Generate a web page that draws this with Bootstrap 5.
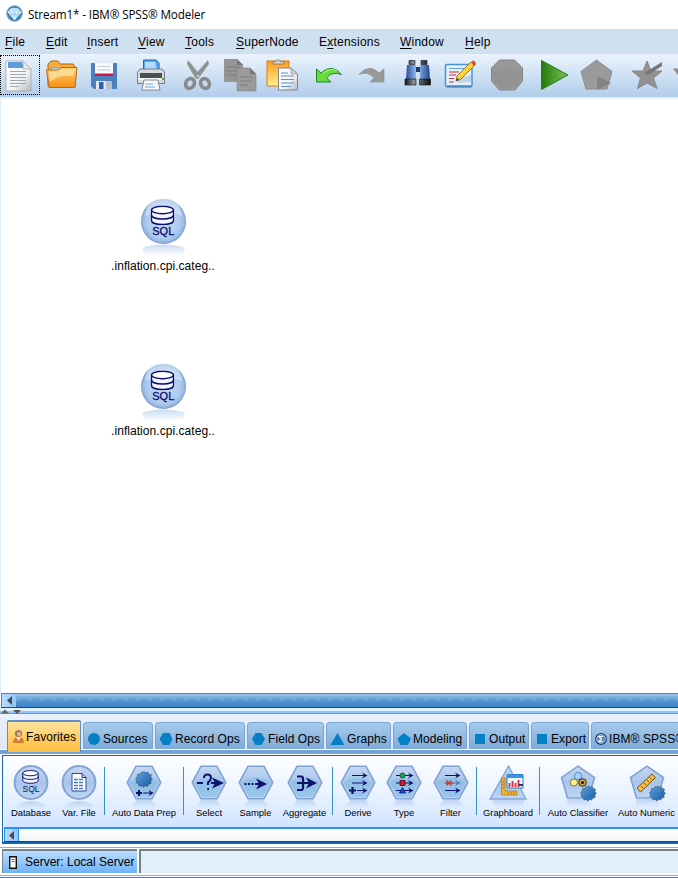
<!DOCTYPE html>
<html lang="en">
<head>
<meta charset="utf-8">
<title>Stream1* - IBM® SPSS® Modeler</title>
<link href="https://cdn.jsdelivr.net/npm/bootstrap@5.3.0/dist/css/bootstrap.min.css" rel="stylesheet">
<style>
html,body{height:100%;overflow:hidden}
body{font:12px/14px "Liberation Sans",Arial,sans-serif;color:#000;background:#fff}
svg{display:block;flex:none;overflow:visible}
.app{width:678px;height:878px;overflow:hidden}
.titlebar{height:29px;padding:0 0 2px 6px;gap:5px;font:11.7px/16px "Open Sans","Noto Sans",sans-serif;letter-spacing:-.13px}
.menus{height:25px;background:#cfe0f1;padding-left:5px;display:grid;grid-template-columns:41px 41px 51px 47px 51px 83px 81px 65px 40px;letter-spacing:.22px;align-items:center}
.menus span{white-space:nowrap}
.menus u{text-underline-offset:2px}
.tools{height:43px;gap:15px;padding:0 0 2px 4px;background:linear-gradient(#eaf3fd,#cfe1f4 50%,#b1cceb)}
.tools>div{gap:10px}
.focusbox{outline:1px dotted #000;outline-offset:3px}
.canvas{height:596px;border-top:2px solid #e6f0fc;border-left:1px solid #dfeefb}
.node{position:absolute;width:130px;text-align:center;letter-spacing:.05px}
.node.n1{left:97px;top:100px}.node.n2{left:97px;top:265px}
.node-label{margin-top:5px}
.hscroll{height:15px;margin-left:1px;border:1px solid #1c90f5;border-bottom-color:#0a4c90;background:linear-gradient(#9fc7ec,#5f9fd8 40%,#4a90d0 65%,#3f83c6);border-right:0}
.arrow-btn{width:14px;height:100%;background:linear-gradient(90deg,#b8dcff,#90c4fa)}
.hscroll .track{background:repeating-linear-gradient(90deg,rgba(255,255,255,.09) 0 5px,transparent 5px 12px) 0 4px/100% 3px repeat-x}
.divider{height:6px;background:linear-gradient(#e0f3ff 0 3px,#8fc4ff 3px 5px,#7297c0 5px)}
.tabstrip{height:40px;background:linear-gradient(#ebf1fc,#dfe6f6 35px,#fff 35px);background-clip:padding-box;border-bottom:4px solid #73a3d6;padding:5px 0 0 7px}
.tabgrid{display:grid;grid-template-columns:74px 70px 90px 77px 65px 74px 60px 58px 110px;column-gap:2px;height:30px;align-items:end}
.ptab{height:27px;border:1px solid #7aa6d6;border-bottom:0;border-radius:4px 4px 0 0;background:linear-gradient(#a7cbec,#7eaad8);padding:5px 0 0 4px;gap:3px;white-space:nowrap;overflow:hidden;letter-spacing:.08px}
.ptab.sel{height:32px;margin-bottom:-3px;z-index:1;border:1px solid #5f8fc4;border-top-width:2px;border-bottom:0;background:linear-gradient(#ffe3a0,#ffcf68 50%,#ffbe40);padding:0 0 1px 4px;gap:1px;border-radius:2px 2px 0 0}
.palette{margin:1px 0 0 2px;height:89px;border:1px solid #1166b8;border-right:0;border-bottom-width:2px;padding:0 0 0 1px;background:#fff}
.pgrid{height:71px;padding:9px 0 0 4px;display:grid;grid-template-columns:46px 50px 1px 78px 1px 50px 43px 55px 1px 50px 42px 51px 1px 62px 1px 76px 61px;background:linear-gradient(#fdfeff,#e8f2ff 55%,#d0e4ff);font-size:9.4px;line-height:11px}
.pgrid>div{display:flex;flex-direction:column;align-items:center;white-space:nowrap;min-width:0}
.pgrid>i{background:#3a8fd0;height:48px;margin-top:2px}
.pgrid svg{margin-bottom:6px}
.pscroll{height:15px;border-top:2px solid #2b90f5;border-bottom:1px solid #153f66;background:linear-gradient(#fff,#f2f3f6)}
.pscroll .arrow-btn{width:15px;border-left:1px solid #2b90f5;border-right:1px solid #2b90f5}
.statusbar{margin-top:3px;height:29px;border-top:1px solid #a3a7ae;border-bottom:1px solid #a3a7ae;padding:1px 0 2px 2px;background:#fff;gap:2px}
.server{width:135px;border:1px solid #77818b;border-width:2px 0 0 1px;background:linear-gradient(#b9dcff,#6db3f5);padding:0 0 0 6px;gap:8px}
.fillcell{border:1px solid #77818b;border-width:2px 0 0 2px;background:#e3effb}
.baseline{height:1px;background:#2482d8}
</style>
<script src="https://cdn.jsdelivr.net/npm/bootstrap@5.3.0/dist/js/bootstrap.bundle.min.js"></script>
</head>
<body>
<svg width="0" height="0" class="position-absolute">
<defs>
<linearGradient id="gb" x2="0" y2="1"><stop stop-color="#c4d7f2"/><stop offset=".5" stop-color="#a9c5ea"/><stop offset="1" stop-color="#bdd6f4"/></linearGradient>
<radialGradient id="gball" cx=".5" cy=".5" r=".5"><stop stop-color="#c6dcf7"/><stop offset=".75" stop-color="#aecaee"/><stop offset=".9" stop-color="#9bbbe6"/><stop offset="1" stop-color="#7797cb"/></radialGradient>
<linearGradient id="gr" x2="0" y2="1"><stop stop-color="#9dbde6" stop-opacity=".55"/><stop offset="1" stop-color="#9dbde6" stop-opacity="0"/></linearGradient>
<linearGradient id="go" x2="0" y2="1"><stop stop-color="#ffd27a"/><stop offset="1" stop-color="#f58f10"/></linearGradient>
<linearGradient id="gp" x2="1" y2="1"><stop stop-color="#fff"/><stop offset=".6" stop-color="#f1f3f5"/><stop offset="1" stop-color="#b5b8bc"/></linearGradient>
<linearGradient id="gbar"><stop stop-color="#10141c"/><stop offset=".35" stop-color="#8d9298"/><stop offset="1" stop-color="#0a0d14"/></linearGradient>
<linearGradient id="gblu"><stop stop-color="#274f9c"/><stop offset=".45" stop-color="#9cc2f6"/><stop offset="1" stop-color="#1f448c"/></linearGradient>
<linearGradient id="gplay"><stop stop-color="#237a08"/><stop offset="1" stop-color="#7cc25c"/></linearGradient>
<linearGradient id="gyel" x2="0" y2="1"><stop stop-color="#ff9a1e"/><stop offset="1" stop-color="#fff08a"/></linearGradient>
<linearGradient id="ggear" x2="1" y2="1"><stop stop-color="#5aa0e0"/><stop offset="1" stop-color="#1b5ba4"/></linearGradient>
<symbol id="hexa" viewBox="0 0 36 36" overflow="visible">
<path d="M10.500 34.500L5 43H31L25.500 34.500Z" fill="url(#gr)"/>
<path d="M10 1.200H26L34.800 17.500 26 33.800H10L1.200 17.500Z" fill="url(#gb)" stroke="#82a2d2" stroke-width="1.600"/>
<path d="M3.500 17Q18 8 32.500 17L25 32H11Z" fill="#86bde4" opacity=".65"/></symbol>
<symbol id="circ" viewBox="0 0 36 36" overflow="visible">
<path d="M3 41Q18 31 33 41L33 44H3Z" fill="url(#gr)"/>
<circle cx="18" cy="17.500" r="16.400" fill="url(#gb)" stroke="#86a4d3" stroke-width="2"/></symbol>
<symbol id="penta" viewBox="0 0 36 36" overflow="visible">
<path d="M8 34L5 42H31L28 34Z" fill="url(#gr)"/>
<path d="M18 1.200L34.500 12.500 28.500 33H7.500L1.500 12.500Z" fill="url(#gb)" stroke="#82a2d2" stroke-width="1.600"/></symbol>
<symbol id="gear" viewBox="0 0 18 18"><path d="M9 .8l1.600 1.600 2.400-.8 .8 2.100 2.500.6-.5 2.500 1.500 1.900-1.600 1.900.3 2.600-2.500.5-1.100 2.300-2.400-.8L8.500 17l-1.900-1.700-2.500.4-.8-2.400L1 12.200l.7-2.400L.6 7.800l2-1.500.1-2.500 2.500-.3L6.500 1.500 8 2Z" fill="url(#ggear)" stroke="#455060" stroke-width=".6"/></symbol>
<symbol id="db" viewBox="0 0 24 20"><path d="M1 4.500V15C1 20.300 23 20.300 23 15V4.500" fill="#f0f6ff" stroke="#0c0c6e" stroke-width="1.400"/><ellipse cx="12" cy="4.500" rx="11" ry="3.700" fill="#fbfdff" stroke="#0c0c6e" stroke-width="1.400"/><path d="M1 9.500C1 14.800 23 14.800 23 9.500" fill="none" stroke="#0c0c6e" stroke-width="1.400"/></symbol>
<symbol id="bignode" viewBox="0 0 46 57">
<path d="M2 49Q10 45.500 23.500 45.500T45 49L42 57H5Z" fill="url(#gr)"/>
<circle cx="23.500" cy="22.500" r="22.500" fill="url(#gball)"/>
<path d="M5 17A18.500 18.500 0 0 1 42 17Q23 9 5 17" fill="#dce8f9" opacity=".6"/>
<use href="#db" x="10.500" y="6.500" width="24" height="20"/>
<text x="23.300" y="36" font-size="11" text-anchor="middle" fill="#0c0c6e" stroke="#0c0c6e" stroke-width=".3">SQL</text></symbol>
<symbol id="arr" viewBox="0 0 12 8"><path d="M0 4H8" stroke="#10106e" stroke-width="1.400"/><path d="M6 .5L12 4 6 7.500 8 4Z" fill="#10106e"/></symbol>
<symbol id="leftarrow" viewBox="0 0 5 9"><path d="M5 0V9L0 4.500Z" fill="#4b4b4f"/></symbol>
</defs>
</svg>
<div class="app d-flex flex-column">
<header class="titlebar d-flex align-items-center">
<svg width="17" height="17"><circle cx="8.500" cy="8.500" r="7.800" fill="#3b86b4" stroke="#8ba9bd"/><path d="M5 3.800H12L15 7.300 8.500 14.600 2 7.300Z" fill="#9bd0ec" stroke="#e6f5fc"/><path d="M2 7.300H15M5 3.800L8.500 14.600 12 3.800M5.500 7.300L8.500 3.800 11.500 7.300" stroke="#e9f6fc" fill="none" stroke-width=".9"/></svg><span class="text-nowrap">Stream1* - IBM® SPSS® Modeler</span>
</header>
<nav class="menus"><span><u>F</u>ile</span><span><u>E</u>dit</span><span><u>I</u>nsert</span><span><u>V</u>iew</span><span><u>T</u>ools</span><span><u>S</u>uperNode</span><span>E<u>x</u>tensions</span><span><u>W</u>indow</span><span><u>H</u>elp</span></nav>
<div class="tools d-flex align-items-center">
<div class="d-flex">
<svg class="focusbox" width="32" height="32"><path d="M2 2H19L27 10V32H2Z" fill="url(#gp)" stroke="#a2a5a8" stroke-width=".8"/><path d="M4 3H18L20 9H4Z" fill="#5b9cdb"/><path d="M19 2V10H27Z" fill="#e7e9ec" stroke="#999" stroke-width=".6"/><path d="M6 12.500H22M6 15.500H22M6 18.500H22M6 21.500H22M6 24.500H22M6 27.500H15" stroke="#a4a7ab" stroke-width="1"/></svg>
<svg width="32" height="32"><path d="M2 27V5L5 2H12L14 5H27L29 8V27Z" fill="#f9ab3e" stroke="#b8640c"/><path d="M5 9H29V14H5Z" fill="#d7ecfa" stroke="#4c8dc0" stroke-width=".7"/><path d="M0.500 11H12L15 8.500H31L29 28.500H3Z" fill="url(#go)" stroke="#bb6a10"/><path d="M3 13L13 12 16 10.500H29L27 17Q14 15 4 23Z" fill="#ffe6a8" opacity=".7"/></svg>
<svg width="32" height="32"><path d="M3 4H29V30H6L3 27Z" fill="#4c80bf"/><path d="M7 4H25V17H7Z" fill="#f7f9fc"/><path d="M9.500 7.500H22M9.500 11H22" stroke="#c4cad2"/><path d="M7 14.500H25V17H7Z" fill="#d01446"/><path d="M8 22H24V30H8Z" fill="#e4e8ec"/><path d="M11 23H15.500V30H11Z" fill="#2a61a8"/><path d="M18 22H24V30H18Z" fill="#b8bfc8"/></svg>
</div>
<div class="d-flex"><svg width="32" height="32"><path d="M8.500 13V1H21L24 4V13Z" fill="#58a9f0" stroke="#2065b0"/><path d="M10 3H20L22 12H10Z" fill="#b2dbff"/><path d="M2.500 13L5 10H27L29.500 13V24.500H2.500Z" fill="#d7dadd" stroke="#777c80"/><path d="M5 14H27V19H5Z" fill="#4c5054"/><path d="M3 20H29" stroke="#f5f6f6" stroke-width="2"/><path d="M27 20h2" stroke="#40b020" stroke-width="2"/><path d="M9 21H23L25 31H7Z" fill="#f6f9fb" stroke="#868b90"/><path d="M10 25H18M10 28H20" stroke="#6aa2da"/></svg></div>
<div class="d-flex">
<svg width="32" height="32"><path d="M6 1L18 16 14 20 5 5Z M26 1L27 5 16 20 12 17Z" fill="#919191"/><ellipse cx="8" cy="24.500" rx="4.200" ry="5" transform="rotate(30 8 24.500)" fill="none" stroke="#898989" stroke-width="3.600"/><ellipse cx="23" cy="24.500" rx="4.200" ry="5" transform="rotate(-30 23 24.500)" fill="none" stroke="#898989" stroke-width="3.600"/><circle cx="16" cy="17" r="1" fill="#ddd"/></svg>
<svg width="32" height="32"><path d="M0 0H13L19 6V23H0Z" fill="#959595"/><path d="M13 0V6H19Z" fill="#777"/><path d="M2 8H15M2 12H15M2 16H12" stroke="#7e7e7e"/><path d="M13 9H26L32 15V32H13Z" fill="#9b9b9b" stroke="#858585" stroke-width=".6"/><path d="M26 9V15H32Z" fill="#777"/><path d="M16 18H28M16 22H28M16 26H24" stroke="#7e7e7e"/></svg>
<svg width="32" height="32"><path d="M1 2H23V27H1Z" fill="url(#gyel)" stroke="#d97a12"/><path d="M7 5V2.500H10Q12-1.500 14 2.500H18V5Z" fill="#d2d4d6" stroke="#777" stroke-width=".8"/><path d="M12.500 9H25L31.500 15V31H12.500Z" fill="url(#gp)" stroke="#818589"/><path d="M25 9V15H31.500Z" fill="#ccd0d4" stroke="#888" stroke-width=".6"/><path d="M15 14H22M15 17H28M15 20.500H28M15 24H28M15 27.500H25" stroke="#5b93c8"/></svg>
</div>
<div class="d-flex">
<svg width="32" height="32"><path d="M3.500 10L8 14Q19 4 28.500 15.500Q19 12 13.500 19L18 23H3.500Z" fill="#68dc3c" stroke="#23852a" stroke-width="1"/><path d="M10 14Q18 8 24 12" fill="none" stroke="#b7f5a0"/></svg>
<svg width="32" height="32"><path d="M29 10L24 14Q14 4 4 15.500Q13 12 19 19L15 23H29Z" fill="#999" stroke="#8a8a8a" stroke-width=".6"/></svg>
</div>
<div class="d-flex">
<svg width="32" height="32"><path d="M8 8H13L14 24H4ZM18 8H24L28 24H18Z" fill="url(#gblu)"/><path d="M13 8H19V13H13Z" fill="#223b6a"/><path d="M5 6H14V20H4ZM18 6H27L28 20H18Z" fill="url(#gblu)"/><path d="M7 1.500H13V5.500H7ZM19 1.500H25V5.500H19ZM3 20H14V26H3ZM17.500 20H28.500V26H17.500Z" fill="url(#gbar)" stroke="#111" stroke-width=".6"/></svg>
<svg width="32" height="32"><path d="M2.500 5.500H26Q28 5.500 28 8V26Q28 28 26 28H4Q1.500 28 1.500 26V7Q1.500 5.500 3 5.500Z" fill="#e4f2fc" stroke="#4b92ce" stroke-width="1.500"/><path d="M3 27H27" stroke="#4880bb" stroke-width="1.500"/><path d="M5 9.500H20" stroke="#61a2d8"/><path d="M5 13H15M5 16H12M5 19.500H10M5 23H10" stroke="#d22b33" stroke-width="1.200"/><path d="M14 20L27 16V23L14 24Z" fill="#a7bdd3" opacity=".6"/><path d="M27 3L31 6 17 20 12 22 13 17Z" fill="#ffd236" stroke="#7a6324" stroke-width=".8"/><path d="M27 3L29 1.500Q33 3 31.500 6L29.500 7Z" fill="#d4542e"/><path d="M12 22l1-3 2 2Z" fill="#333"/></svg>
</div>
<div class="d-flex"><svg width="32" height="32"><path d="M8.500 1H23.500L31.500 9V22L24 31H8.500L.5 22V9Z" fill="#989898" stroke="#858585"/><path d="M2 13Q16 8 30 13V21L23 29H9L2 21Z" fill="#8e8e8e" opacity=".5"/></svg></div>
<div class="d-flex">
<svg width="32" height="32"><path d="M3.500 1.500V30.500L30 16Z" fill="url(#gplay)" stroke="#2a7c12"/></svg>
<svg width="32" height="32"><path d="M16.500 1L32 12.500 27 30H6L1 12.500Z" fill="#9b9b9b" stroke="#8c8c8c"/><path d="M17 17L31 24 17 31Z" fill="#838383"/></svg>
</div>
<div class="d-flex ms-1">
<svg width="32" height="32"><path d="M16 2L20 12 31 12 22.500 19 26 29.500 16 24 6.500 29.500 9.500 19 1 12H12Z" fill="#929292" stroke="#878787"/><path d="M13 14L31 3V7L17 16Z" fill="#777"/></svg>
<svg width="32" height="32"><path d="M0 9.500H8V16H5Z" fill="#8c8c8c"/></svg>
</div>
</div>
<main class="canvas position-relative">
<div class="node n1"><svg class="mx-auto" width="46" height="57"><use href="#bignode"/></svg><div class="node-label mt-0 pt-1 lh-1">.inflation.cpi.categ..</div></div>
<div class="node n2"><svg class="mx-auto" width="46" height="57"><use href="#bignode"/></svg><div class="node-label mt-0 pt-1 lh-1">.inflation.cpi.categ..</div></div>
</main>
<div class="hscroll d-flex"><div class="arrow-btn d-flex align-items-center justify-content-center"><svg width="5" height="9"><use href="#leftarrow"/></svg></div><div class="track flex-grow-1"></div></div>
<div class="divider"><svg width="24" height="5"><path d="M1 5.500L5 1.500 9 5.500Z" fill="#666"/><path d="M13 2H21L17 6Z" fill="#5a5450"/></svg></div>
<div class="tabstrip"><div class="tabgrid">
<div class="ptab sel d-flex align-items-center"><svg width="13" height="15"><path d="M1 14Q1 9 4.500 8H8.500Q12 9 12 14Z" fill="#e07b2e"/><path d="M4 8L6.500 12 9 8Z" fill="#f5e8dc"/><circle cx="6.500" cy="4.500" r="3.600" fill="#a47b62"/><circle cx="7" cy="5" r="2" fill="#e2bc9e"/></svg><span>Favorites</span></div>
<div class="ptab d-flex align-items-center"><svg width="12" height="12"><circle cx="6" cy="6" r="6" fill="#0580c4"/></svg><span>Sources</span></div>
<div class="ptab d-flex align-items-center"><svg width="12" height="12"><path d="M3 0H9.500L12.500 6 9.500 12H3L-.5 6Z" fill="#0580c4"/></svg><span>Record Ops</span></div>
<div class="ptab d-flex align-items-center"><svg width="13" height="12"><path d="M3.500 0H9.500L13 6 9.500 12H3.500L0 6Z" fill="#0580c4"/></svg><span>Field Ops</span></div>
<div class="ptab d-flex align-items-center"><svg width="13" height="12"><path d="M6.500 0L13.500 12H-.5Z" fill="#0580c4"/></svg><span>Graphs</span></div>
<div class="ptab d-flex align-items-center"><svg width="12" height="12"><path d="M6 0L13 5.500 10 12H2.500L-.5 5.500Z" fill="#0580c4"/></svg><span>Modeling</span></div>
<div class="ptab d-flex align-items-center"><svg width="12" height="10"><path d="M1 0H11V10H1Z" fill="#0580c4"/></svg><span>Output</span></div>
<div class="ptab d-flex align-items-center"><svg width="12" height="10"><path d="M1 0H11V10H1Z" fill="#0580c4"/></svg><span>Export</span></div>
<div class="ptab d-flex align-items-center"><svg width="10" height="12"><circle cx="5" cy="6" r="5.300" fill="#5686be" stroke="#1b3a79" stroke-width="1.200"/><circle cx="5" cy="6" r="4.300" fill="none" stroke="#dbe8f6" stroke-width=".7"/><path d="M7 3.500H3L5.500 6 3 8.500H7" fill="none" stroke="#fff" stroke-width="1.200"/></svg><span>IBM® SPSS®</span></div>
</div></div>
<section class="palette">
<div class="pgrid">
<div><svg width="36" height="36"><use href="#circ" width="36" height="36"/><use href="#db" x="8.500" y="5" width="18" height="14"/><text x="18" y="27" font-size="8.500" text-anchor="middle" fill="#0c0c6e">SQL</text></svg>Database</div>
<div><svg width="36" height="36"><use href="#circ" width="36" height="36"/><path d="M11 8.500H21L25 12.500V26H11Z" fill="#fff" stroke="#2c4c96"/><path d="M21 8.500V12.500H25" fill="none" stroke="#182480"/><path d="M13 14.500H23M13 17.500H23M13 20.500H23M13 23.500H23" stroke="#4779bc" stroke-width="1.500" stroke-dasharray="4 1"/></svg>Var. File</div>
<i></i>
<div><svg width="36" height="36"><use href="#hexa" width="36" height="36"/><use href="#gear" x="9" y="5.500" width="18" height="18"/><path d="M10 28H16M13 25V31" stroke="#10106e" stroke-width="2"/><use href="#arr" x="17" y="24.500" width="11" height="7"/></svg>Auto Data Prep</div>
<i></i>
<div><svg width="36" height="36"><use href="#hexa" width="36" height="36"/><path d="M6 18H12M20 18H26" stroke="#10106e" stroke-width="2"/><path d="M13 13Q13 9.500 16.500 9.500T20 13Q20 15 17 17.500V20M16.200 24H18" fill="none" stroke="#10106e" stroke-width="2"/><path d="M21 12.500L33 18 21 23.500 24 18Z" fill="#10106e"/></svg>Select</div>
<div><svg width="36" height="36"><use href="#hexa" width="36" height="36"/><path d="M6.500 19H19" stroke="#10106e" stroke-width="2" stroke-dasharray="2 1.500"/><path d="M19 19H24" stroke="#10106e" stroke-width="2"/><path d="M18 13.500L29 19 18 24.500 21 19Z" fill="#10106e"/></svg>Sample</div>
<div><svg width="36" height="36"><use href="#hexa" width="36" height="36"/><path d="M10 11.500H14.500Q16 11.500 16 14V22Q16 25 14.500 25H10M10 18H26" fill="none" stroke="#10106e" stroke-width="2.200"/><path d="M19 12.500L30 18 19 23.500 22 18Z" fill="#10106e"/></svg>Aggregate</div>
<i></i>
<div><svg width="36" height="36"><use href="#hexa" width="36" height="36"/><path d="M12 10.500H24M12 18H24M17 25.500H24" stroke="#10106e" stroke-width="1.200"/><path d="M22 7.500L27.500 10.500 22 13.500 24 10.500ZM22 15L27.500 18 22 21 24 18ZM22 22.500L27.500 25.500 22 28.500 24 25.500Z" fill="#10106e"/><path d="M9 25.500H16M12.500 22V29" stroke="#10106e" stroke-width="2.200"/></svg>Derive</div>
<div><svg width="36" height="36"><use href="#hexa" width="36" height="36"/><path d="M10 10.500H24M10 18H24M10 25.500H24" stroke="#10106e" stroke-width="1.200"/><path d="M22 7.500L27.500 10.500 22 13.500 24 10.500ZM22 15L27.500 18 22 21 24 18ZM22 22.500L27.500 25.500 22 28.500 24 25.500Z" fill="#10106e"/><circle cx="16.500" cy="10.500" r="2.500" fill="#0eb044" stroke="#104030" stroke-width=".8"/><path d="M14 15.500H19V20.500H14Z" fill="#d81530" stroke="#400820" stroke-width=".8"/><path d="M16.500 22.500L19.500 28H13.500Z" fill="#1a50c8" stroke="#10106e" stroke-width=".8"/></svg>Type</div>
<div><svg width="36" height="36"><use href="#hexa" width="36" height="36"/><path d="M12 10.500H24M12 25.500H24" stroke="#10106e" stroke-width="1.200"/><path d="M22 7.500L27.500 10.500 22 13.500 24 10.500ZM22 22.500L27.500 25.500 22 28.500 24 25.500Z" fill="#10106e"/><path d="M19 18H24" stroke="#477cb4"/><path d="M22 15L27.500 18 22 21 24 18Z" fill="#477cb4"/><path d="M13.500 15.500L18.500 20.500M18.500 15.500L13.500 20.500M12 18H20" stroke="#c13b36" stroke-width="1.300"/></svg>Filter</div>
<i></i>
<div><svg width="36" height="36"><path d="M2 35L5 42H32L35 35Z" fill="url(#gr)"/><path d="M18.500 1L36 34H0Z" fill="url(#gb)" stroke="#82a2d2" stroke-width="1.300"/><path d="M17 9.500H33V23H17Z" fill="#eff7ff" stroke="#2b79c4"/><path d="M17 9.500H33V13H17Z" fill="#3a94df"/><path d="M19.500 22V18M22.500 22V16M25.500 22V18M28.500 22V15" stroke="#d92a3c" stroke-width="1.800"/><path d="M29 20H33" stroke="#163c80" stroke-width="2"/><path d="M11.500 13H15V26H27V30H11.500Z" fill="#f1b437" stroke="#b4781c" stroke-width=".8"/><path d="M12 17H14M12 20H14M12 23H14M18 27V29M21 27V29M24 27V29" stroke="#8f5c15" stroke-width=".7"/></svg>Graphboard</div>
<i></i>
<div><svg width="36" height="36"><use href="#penta" width="36" height="36"/><circle cx="18" cy="11" r="3.600" fill="#a8d1ff" stroke="#4d8cd8"/><circle cx="14" cy="17.500" r="3.600" fill="#fff08b" stroke="#857328"/><circle cx="22.500" cy="17.500" r="3.800" fill="#d5a83a" stroke="#222"/><circle cx="22.500" cy="17.500" r="1.600" fill="#201810"/><use href="#gear" x="20" y="20" width="17" height="17"/></svg>Auto Classifier</div>
<div><svg width="36" height="36"><use href="#penta" width="36" height="36"/><path d="M8 23L23 9 26.500 12.500 11.500 27Z" fill="#f5bf46" stroke="#6d4b19"/><path d="M12 21l2 2M15 18l2 2M18 15l2 2M21 12.500l2 2" stroke="#6d4b19"/><use href="#gear" x="20" y="20" width="17" height="17"/></svg>Auto Numeric</div>
</div>
<div class="pscroll d-flex"><div class="arrow-btn d-flex align-items-center justify-content-center"><svg width="5" height="9"><use href="#leftarrow"/></svg></div></div>
</section>
<footer class="statusbar d-flex">
<div class="server d-flex align-items-center text-nowrap"><svg width="8" height="13"><path d="M.7.700H7.300V12.300H.7Z" fill="#f7f7f7" stroke="#111" stroke-width="1.400"/><path d="M2.500 3.500H5.500M2.500 5.500H5.500" stroke="#777"/></svg><span>Server: Local Server</span></div>
<div class="fillcell flex-grow-1"></div>
</footer>
<div class="baseline mt-auto"></div>
</div>
</body>
</html>
